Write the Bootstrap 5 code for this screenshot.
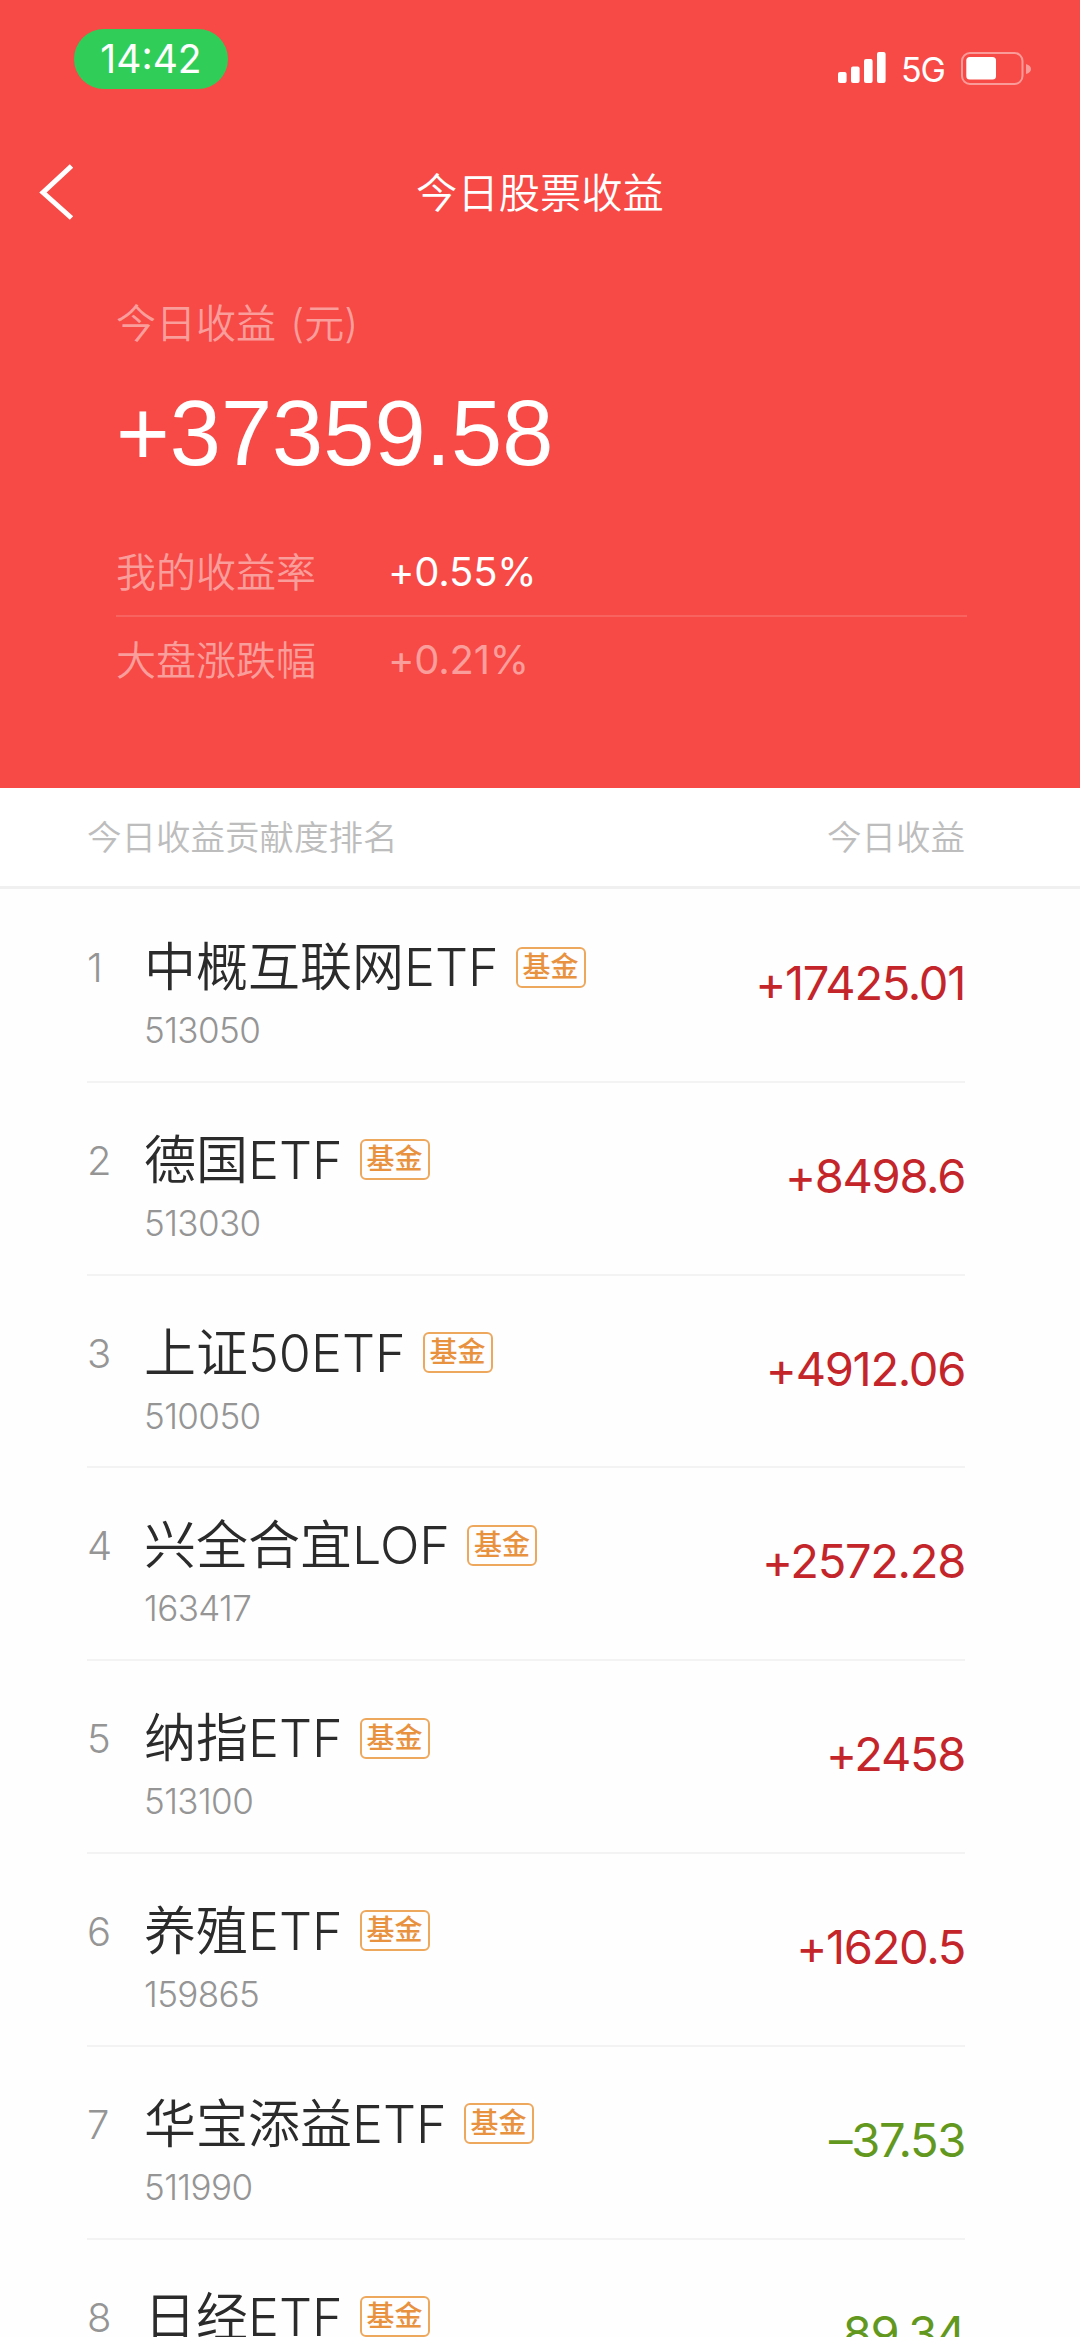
<!DOCTYPE html>
<html lang="zh-CN">
<head>
<meta charset="utf-8">
<meta name="viewport" content="width=device-width, initial-scale=1">
<title>今日股票收益</title>
<link rel="stylesheet" href="https://cdn.jsdelivr.net/npm/bootstrap@5.3.0/dist/css/bootstrap.min.css">
<style>
html,body{height:2337px;overflow:hidden}
body{font-family:Inter,"Noto Sans CJK SC",sans-serif;font-weight:350;background:#fefefe;color:#2b2b2b}
.hero{background:#f74a46;height:788px;line-height:1}
.statusbar{height:92px;padding:29px 47px 0 74px}
.clock{width:154px;height:60px;background:#30ce58;font-size:39px;font-weight:400;line-height:60px}
.status-icons{padding-top:23px}
.net{font-size:34px;font-weight:400;line-height:36px;letter-spacing:-1px;margin:0 16px 0 15px}
.titlebar{height:100px;padding:0 40px;margin-top:52px}
.titlebar h1{font-size:41.3px;font-weight:350}
.soft{color:rgba(255,255,255,.47)}
.summary{padding:0 113px 0 116px}
.caption{font-size:40px;line-height:60px;margin-top:50px;word-spacing:3px}
.total{font-family:"Liberation Sans",Arial,sans-serif;font-size:92px;font-weight:400;line-height:100px;margin-top:29px}
.rates{margin-top:45px}
.rate{font-size:40px;height:87px}
.rate>:first-child{width:272px;padding-top:2px}
.rate>:last-child{font-weight:400;letter-spacing:-.2px}
.rate+.rate{border-top:2px solid rgba(255,255,255,.14)}
.rank-head{height:101px;font-size:34.5px;color:#bdbdbd;padding:2px 115px 0 87px;border-bottom:3px solid #f0f0f0;background:#fff}
.rank-list{margin:1px 115px 0 87px}
.fund{height:192.8px;border-bottom:2px solid #f3f3f3;padding-top:41px;line-height:1}
.num{width:57px;font-size:40px;color:#959595;line-height:74px}
.fund-name{font-size:52px;line-height:72px;padding-top:1px;margin-bottom:-1px}
.tag{width:70px;height:41px;font-size:28px;line-height:37px;font-weight:500;color:#e8913f;border:2px solid #eda85e;border-radius:6px;margin-left:17px}
.code{font-size:35px;letter-spacing:-.6px;color:#959595;line-height:42px;margin-top:6px}
.amount{font-size:47px;font-weight:400;letter-spacing:-1.3px;line-height:60px;margin-top:22px}
.up{color:#c4252a}.down{color:#63981f}
</style>
</head>
<body>
<header class="hero text-white">
  <div class="statusbar d-flex justify-content-between">
    <div class="clock rounded-pill text-center">14:42</div>
    <div class="status-icons d-flex align-items-start">
      <svg width="48" height="32" viewBox="0 0 48 32" fill="#fff"><rect y="20" width="8.6" height="11" rx="2"/><rect x="13" y="14.500" width="8.600" height="16.500" rx="2"/><rect x="26" y="7" width="8.600" height="24" rx="2"/><rect x="39" width="8.600" height="31" rx="2"/></svg>
      <span class="net">5G</span>
      <svg width="72" height="33" viewBox="0 0 72 33"><rect x="1" y="1" width="60.500" height="31" rx="8" fill="none" stroke="#fff" stroke-opacity=".45" stroke-width="2"/><rect x="5.300" y="5" width="29.700" height="22.500" rx="3.500" fill="#fff"/><path d="M65 12q5 1.500 5 5t-5 5z" fill="#fff" fill-opacity=".45"/></svg>
    </div>
  </div>
  <div class="titlebar position-relative d-flex align-items-center justify-content-center">
    <svg class="position-absolute start-0 ms-4" width="60" height="60" viewBox="0 0 60 60" fill="none" stroke="#fff" stroke-width="5"><path d="M47.500 2 19 28.500 47.500 54"/></svg>
    <h1 class="m-0">今日股票收益</h1>
  </div>
  <div class="summary">
    <div class="caption soft">今日收益 (元)</div>
    <div class="total">+37359.58</div>
    <div class="rates">
      <div class="rate d-flex align-items-center"><span class="soft">我的收益率</span><span>+0.55%</span></div>
      <div class="rate d-flex align-items-center soft"><span>大盘涨跌幅</span><span>+0.21%</span></div>
    </div>
  </div>
</header>
<div class="rank-head d-flex justify-content-between align-items-center"><span>今日收益贡献度排名</span><span>今日收益</span></div>
<main class="rank-list">
  <div class="fund d-flex"><div class="num">1</div><div class="flex-grow-1"><div class="d-flex align-items-center"><span class="fund-name">中概互联网ETF</span><span class="tag text-center">基金</span></div><div class="code">513050</div></div><div class="amount up">+17425.01</div></div>
  <div class="fund d-flex"><div class="num">2</div><div class="flex-grow-1"><div class="d-flex align-items-center"><span class="fund-name">德国ETF</span><span class="tag text-center">基金</span></div><div class="code">513030</div></div><div class="amount up">+8498.6</div></div>
  <div class="fund d-flex"><div class="num">3</div><div class="flex-grow-1"><div class="d-flex align-items-center"><span class="fund-name">上证50ETF</span><span class="tag text-center">基金</span></div><div class="code">510050</div></div><div class="amount up">+4912.06</div></div>
  <div class="fund d-flex"><div class="num">4</div><div class="flex-grow-1"><div class="d-flex align-items-center"><span class="fund-name">兴全合宜LOF</span><span class="tag text-center">基金</span></div><div class="code">163417</div></div><div class="amount up">+2572.28</div></div>
  <div class="fund d-flex"><div class="num">5</div><div class="flex-grow-1"><div class="d-flex align-items-center"><span class="fund-name">纳指ETF</span><span class="tag text-center">基金</span></div><div class="code">513100</div></div><div class="amount up">+2458</div></div>
  <div class="fund d-flex"><div class="num">6</div><div class="flex-grow-1"><div class="d-flex align-items-center"><span class="fund-name">养殖ETF</span><span class="tag text-center">基金</span></div><div class="code">159865</div></div><div class="amount up">+1620.5</div></div>
  <div class="fund d-flex"><div class="num">7</div><div class="flex-grow-1"><div class="d-flex align-items-center"><span class="fund-name">华宝添益ETF</span><span class="tag text-center">基金</span></div><div class="code">511990</div></div><div class="amount down">–37.53</div></div>
  <div class="fund d-flex"><div class="num">8</div><div class="flex-grow-1"><div class="d-flex align-items-center"><span class="fund-name">日经ETF</span><span class="tag text-center">基金</span></div></div><div class="amount down">89.34</div></div>
</main>
<script src="https://cdn.jsdelivr.net/npm/bootstrap@5.3.0/dist/js/bootstrap.bundle.min.js"></script>
</body>
</html>
